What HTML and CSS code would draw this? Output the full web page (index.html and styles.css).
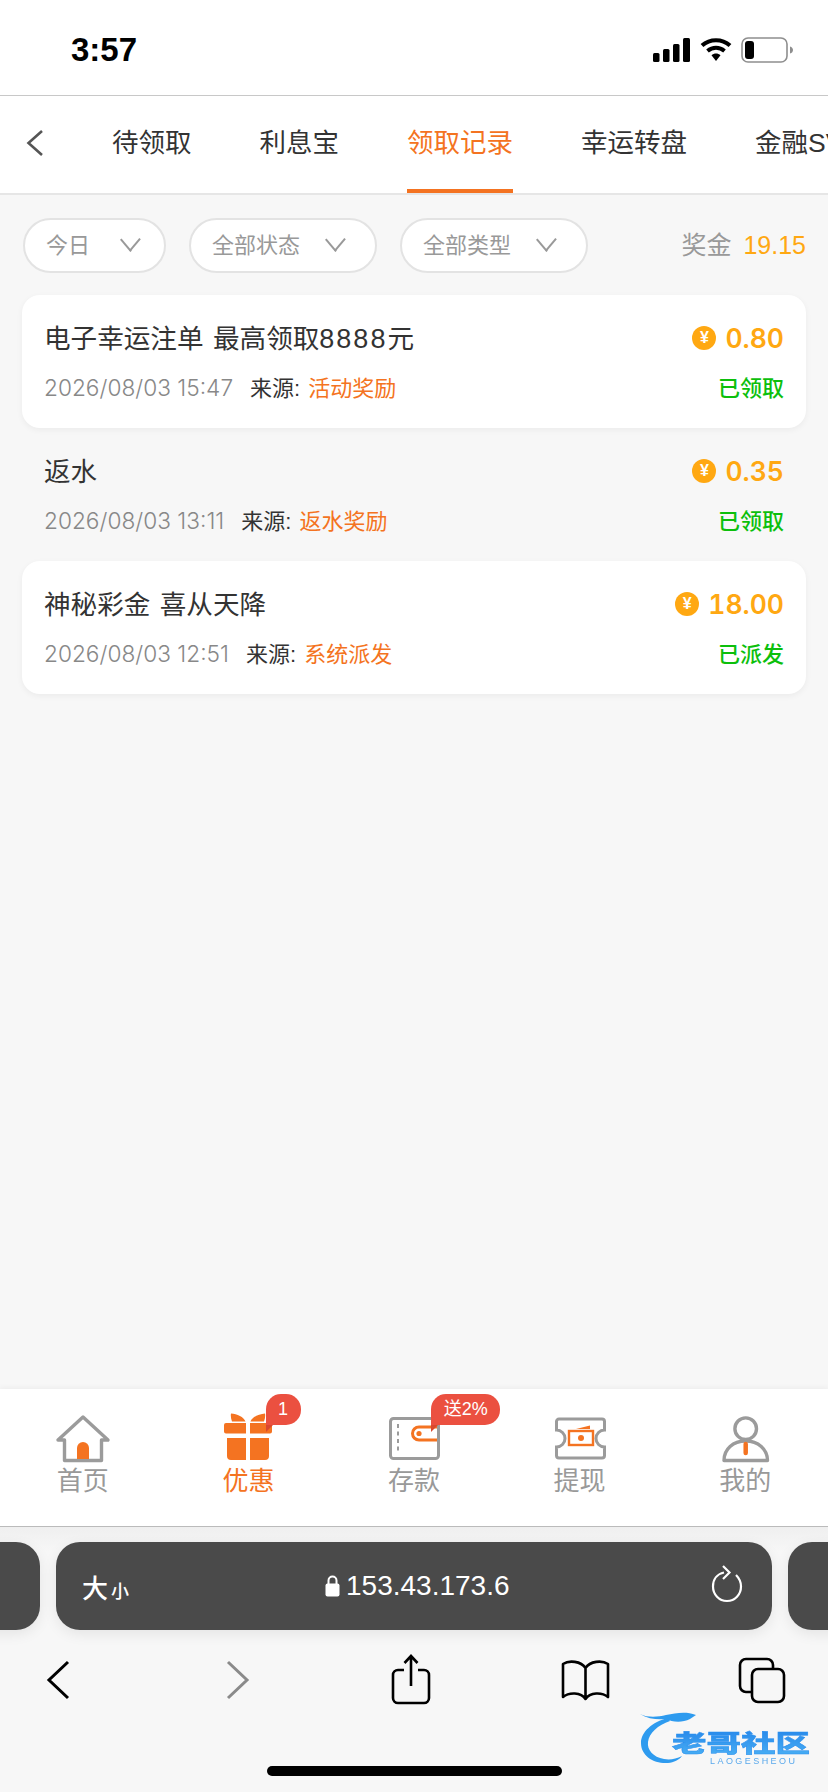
FILE: index.html
```html
<!doctype html>
<html lang="zh">
<head>
	<meta charset="UTF-8">
	<title>领取记录</title>
	<link rel="stylesheet" href="styles.css">
</head>
<body>
<div class="screen">
	<div class="statusbar">
		<span class="time">3:57</span>
		<div class="status-icons">
			<svg class="signal" width="38" height="24" viewBox="0 0 38 24"><rect x="0" y="15" width="6.5" height="9" rx="1.5"/><rect x="10" y="11" width="6.5" height="13" rx="1.5"/><rect x="20" y="6" width="6.5" height="18" rx="1.5"/><rect x="30" y="0" width="7" height="24" rx="1.5"/></svg>
			<svg class="wifi" width="32" height="24" viewBox="0 0 32 24"><path d="M2 8.500C10 1.500 22 1.500 30 8.500" fill="none" stroke="#000" stroke-width="4.200"/><path d="M7.500 14C12.500 9.800 19.500 9.800 24.500 14" fill="none" stroke="#000" stroke-width="4"/><path d="M11.500 18.200C14 16 18 16 20.500 18.200L16 24Z"/></svg>
			<svg class="battery" width="53" height="26" viewBox="0 0 53 26"><rect x="1" y="1" width="45" height="24" rx="6" fill="none" stroke="#8e8e8e" stroke-width="1.600"/><rect x="4" y="4" width="9" height="18" rx="3"/><path d="M49 9.500C51 10 52 11.500 52 13C52 14.500 51 16 49 16.500Z" fill="#8e8e8e"/></svg>
		</div>
	</div>

	<div class="tabs">
		<svg class="back" width="18" height="28" viewBox="0 0 18 28"><path d="M16 2L2.500 14L16 26" fill="none" stroke="#555" stroke-width="2.600"/></svg>
		<a class="tab">待领取</a>
		<a class="tab">利息宝</a>
		<a class="tab active">领取记录</a>
		<a class="tab">幸运转盘</a>
		<a class="tab">金融SVIP</a>
	</div>

	<div class="filters">
		<div class="pill pill-short"><span>今日</span><i class="arrow"></i></div>
		<div class="pill"><span>全部状态</span><i class="arrow"></i></div>
		<div class="pill"><span>全部类型</span><i class="arrow"></i></div>
		<div class="bonus">奖金<b>19.15</b></div>
	</div>

	<div class="list">
		<div class="record">
			<div class="line">
				<span class="title">电子幸运注单 最高领取<span class="num">8888</span>元</span>
				<span class="amount"><i class="coin">¥</i>0.80</span>
			</div>
			<div class="line">
				<span class="meta"><span class="date">2026/08/03 15:47</span>来源: <em>活动奖励</em></span>
				<span class="state">已领取</span>
			</div>
		</div>
		<div class="record">
			<div class="line">
				<span class="title">返水</span>
				<span class="amount"><i class="coin">¥</i>0.35</span>
			</div>
			<div class="line">
				<span class="meta"><span class="date">2026/08/03 13:11</span>来源: <em>返水奖励</em></span>
				<span class="state">已领取</span>
			</div>
		</div>
		<div class="record">
			<div class="line">
				<span class="title">神秘彩金 喜从天降</span>
				<span class="amount"><i class="coin">¥</i>18.00</span>
			</div>
			<div class="line">
				<span class="meta"><span class="date">2026/08/03 12:51</span>来源: <em>系统派发</em></span>
				<span class="state">已派发</span>
			</div>
		</div>
	</div>

	<div class="nav">
		<div class="nav-item">
			<svg width="56" height="50" viewBox="0 0 56 50"><path d="M3 27L28 4L53 27H46.500V47.500H9.500V27Z" fill="none" stroke="#9b9b9b" stroke-width="3.400" stroke-linejoin="round"/><path d="M22 46V35a6 6 0 0 1 12 0V46Z" fill="#f47321"/></svg>
			首页
		</div>
		<div class="nav-item active">
			<svg width="56" height="50" viewBox="0 0 56 50"><path d="M11 0.500C17 1 24 4 25.500 8.500H12C11 6 10.500 3 11 0.500ZM45 0.500C39 1 32 4 30.500 8.500H44C45 6 45.500 3 45 0.500Z" fill="#f47321"/><path d="M6 10H26V20.500H6a2 2 0 0 1-2-2V12a2 2 0 0 1 2-2ZM30 10H50a2 2 0 0 1 2 2V18.500a2 2 0 0 1-2 2H30Z" fill="#f47321"/><path d="M7 25H26V47H11a4 4 0 0 1-4-4ZM30 25H49V43a4 4 0 0 1-4 4H30Z" fill="#f47321"/></svg>
			优惠
			<span class="badge badge-num">1</span>
		</div>
		<div class="nav-item">
			<svg width="56" height="50" viewBox="0 0 56 50"><rect x="4.500" y="5.500" width="48" height="40" rx="3" fill="none" stroke="#9b9b9b" stroke-width="3"/><path d="M12 11V40" stroke="#9b9b9b" stroke-width="2" stroke-dasharray="4 3.500"/><path d="M51 14H33a6.500 6.500 0 0 0 0 13H51" fill="none" stroke="#f47321" stroke-width="3"/><circle cx="33" cy="20.500" r="2.600" fill="#f47321"/></svg>
			存款
			<span class="badge badge-text">送2%</span>
		</div>
		<div class="nav-item">
			<svg width="56" height="50" viewBox="0 0 56 50"><path d="M7 6H50a2.500 2.500 0 0 1 2.500 2.500V17a8.500 8.500 0 0 0 0 17V42.500A2.500 2.500 0 0 1 50 45H7a2.500 2.500 0 0 1-2.500-2.500V34a8.500 8.500 0 0 0 0-17V8.500A2.500 2.500 0 0 1 7 6Z" fill="none" stroke="#9b9b9b" stroke-width="3"/><rect x="17" y="18" width="24" height="14" fill="none" stroke="#f47321" stroke-width="2.400"/><circle cx="29" cy="25" r="3" fill="#f47321"/><path d="M24 16L38 12.500V16Z" fill="#f47321"/></svg>
			提现
		</div>
		<div class="nav-item">
			<svg width="56" height="50" viewBox="0 0 56 50"><circle cx="28.700" cy="15.700" r="10.800" fill="none" stroke="#9b9b9b" stroke-width="3.400"/><path d="M7 47.500C7 36 16 28 28.700 28C41 28 50.500 36 50.500 47.500Z" fill="none" stroke="#9b9b9b" stroke-width="3.400" stroke-linejoin="round"/><path d="M28.700 31V40" stroke="#f47321" stroke-width="4.500" stroke-linecap="round"/></svg>
			我的
		</div>
	</div>

	<div class="safari">
		<div class="addr-row">
			<div class="addr"></div>
			<div class="addr addr-main">
				<span class="aa">大<small>小</small></span>
				<span class="url">
					<svg width="15" height="22" viewBox="0 0 15 22"><path d="M3.500 9V5.500a4 4 0 0 1 8 0V9" fill="none" stroke="#fff" stroke-width="2"/><rect x="0.500" y="8.500" width="14" height="13" rx="2" fill="#fff"/></svg>
					153.43.173.6
				</span>
				<svg class="reload" width="32" height="38" viewBox="0 0 32 38"><path d="M13 7.500C6 9 2 14.500 2 21.500C2 29.500 8 36 16 36C24 36 30 29.500 30 21.500C30 17 28 13 25 10" fill="none" stroke="#fff" stroke-width="2.200"/><path d="M12 1L18.500 7.500L12 14" fill="none" stroke="#fff" stroke-width="2.200"/></svg>
			</div>
			<div class="addr"></div>
		</div>
		<div class="toolbar">
			<svg width="60" height="60" viewBox="0 0 60 60"><path d="M40 12L21 30L40 48" fill="none" stroke="#000" stroke-width="3"/></svg>
			<svg width="60" height="60" viewBox="0 0 60 60"><path d="M24 12L43 30L24 48" fill="none" stroke="#8a8a8a" stroke-width="3"/></svg>
			<svg width="60" height="60" viewBox="0 0 60 60"><path d="M24 20H18a5 5 0 0 0-5 5V48a5 5 0 0 0 5 5H44a5 5 0 0 0 5-5V25a5 5 0 0 0-5-5H38M31 36V6M24.500 13L31 6L37.500 13" fill="none" stroke="#000" stroke-width="2.600"/></svg>
			<svg width="60" height="60" viewBox="0 0 60 60"><path d="M30.500 18C26 11 14 10 8 14V47C14 42 26 42 30.500 49C35 42 47 42 53 47V14C47 10 35 11 30.500 18V49" fill="none" stroke="#000" stroke-width="2.600" stroke-linejoin="round"/></svg>
			<svg width="60" height="60" viewBox="0 0 60 60"><rect x="21" y="19" width="32" height="33" rx="6" fill="none" stroke="#000" stroke-width="2.600"/><path d="M21 42H15a6 6 0 0 1-6-6V15a6 6 0 0 1 6-6H36a6 6 0 0 1 6 6V19" fill="none" stroke="#000" stroke-width="2.600"/></svg>
		</div>
		<div class="home-bar"></div>
	</div>

	<!-- 水印 -->
	<svg class="watermark" width="176" height="60" viewBox="0 0 176 60">
		<defs>
			<linearGradient id="wm" x1="0" y1="0" x2="0" y2="1"><stop offset="0" stop-color="#1f7fe8"/><stop offset="1" stop-color="#4db4f5"/></linearGradient>
		</defs>
		<path d="M30 8C14 12 3 22 3 33C3 46 16 54 30 53C36 52.500 41 50 44 46C38 49 32 50 26 49C15 47 9 40 10 32C11 23 20 15 32 11Z" fill="#2e9bef"/>
		<path d="M2 4C10 8 20 7 28 5C38 3 48 1 58 5L52 9C44 13 34 12 28 9C20 10 10 9 2 4Z" fill="#2e9bef"/>
		<text class="wm-name" x="34" y="42" textLength="138" lengthAdjust="spacingAndGlyphs" fill="url(#wm)" stroke="#2b8fee" stroke-width=".5">老哥社区</text>
		<text class="wm-sub" x="72" y="54" textLength="85" lengthAdjust="spacing" fill="#5aa9ec">LAOGESHEOU</text>
	</svg>
</div>
</body>
</html>
```

FILE: styles.css
```css
*{
	padding:0;
	margin:0;
	box-sizing:border-box;
}
body{
	width:828px;
	height:1792px;
	overflow:hidden;
	background:#f7f7f7;
	font-family:"Liberation Sans","Noto Sans CJK SC",sans-serif;
}
.screen{
	position:relative;
	display:flex;
	flex-direction:column;
	height:1792px;
	overflow:hidden;
}

/* 状态栏 */
.statusbar{
	height:96px;
	flex:none;
	display:flex;
	justify-content:space-between;
	align-items:flex-start;
	padding:31px 34px 0 71px;
	background:#fff;
	border-bottom:1px solid #c8c8c8;
}
.time{
	font-size:33px;
	font-weight:bold;
	line-height:38px;
	color:#000;
}
.status-icons{
	display:flex;
	gap:9px;
	padding-top:6px;
}
.signal{
	margin-top:1px;
}

/* 顶部标签 */
.tabs{
	height:99px;
	flex:none;
	display:flex;
	gap:68px;
	padding-left:26px;
	background:#fff;
	border-bottom:2px solid #e6e6e6;
	overflow:hidden;
}
.back{
	align-self:center;
	flex:none;
	margin-top:-4px;
}
.tab{
	flex:none;
	height:97px;
	line-height:95px;
	font-size:26.500px;
	color:#333;
	border-bottom:4px solid transparent;
}
.tab.active{
	color:#f47321;
	border-bottom-color:#f47321;
}

/* 筛选 */
.filters{
	height:100px;
	flex:none;
	display:flex;
	align-items:center;
	gap:23px;
	padding:0 22px 0 23px;
}
.pill{
	height:55px;
	display:flex;
	align-items:center;
	gap:24px;
	padding:0 29px 0 21px;
	font-size:22px;
	color:#999;
	background:#fff;
	border:2px solid #e3e3e3;
	border-radius:28px;
}
.pill span{
	margin-top:-4px;
}
.pill-short{
	gap:29px;
	padding-right:23px;
}
.arrow{
	position:relative;
	width:22px;
	height:14px;
}
.arrow:before,
.arrow:after{
	content:"";
	position:absolute;
	top:6px;
	width:15.500px;
	height:2px;
	background:#999;
}
.arrow:before{
	left:-1px;
	transform:rotate(50deg);
}
.arrow:after{
	right:-1px;
	transform:rotate(-50deg);
}
.bonus{
	margin-left:auto;
	margin-top:-4px;
	font-size:25px;
	color:#999;
}
.bonus b{
	margin-left:12px;
	font-weight:normal;
	color:#ffa812;
}

/* 记录列表 */
.list{
	flex:1;
	padding:0 22px;
}
.record{
	height:133px;
	padding:24px 22px 0 23px;
	border-radius:18px;
}
.record:nth-child(odd){
	background:#fff;
	box-shadow:0 2px 6px rgba(0,0,0,.05);
}
.line{
	display:flex;
	justify-content:space-between;
	align-items:center;
	height:38px;
	margin-bottom:12px;
}
.title{
	margin:-4px 0 0 -1px;
	font-size:26.600px;
	word-spacing:2px;
	color:#333;
}
.num{
	font-size:27px;
	letter-spacing:2px;
}
.amount{
	display:flex;
	align-items:center;
	font-family:Inter,"Liberation Sans",sans-serif;
	font-size:26.500px;
	font-weight:600;
	font-variant-numeric:tabular-nums;
	color:#ffa812;
}
.coin{
	width:24px;
	height:24px;
	margin-right:9px;
	border-radius:50%;
	background:#ffa812;
	color:#fff;
	font-family:"Liberation Sans",sans-serif;
	font-size:16px;
	font-weight:bold;
	font-style:normal;
	line-height:24px;
	text-align:center;
}
.meta{
	margin:-4px 0 0 -1px;
	font-size:22px;
	color:#333;
}
.date{
	margin-right:17px;
	font-family:Inter,"Liberation Sans",sans-serif;
	font-size:22.700px;
	font-weight:300;
	color:#888;
}
.meta em{
	margin-left:2px;
	font-style:normal;
	color:#f47321;
}
.state{
	margin-top:-4px;
	font-size:22px;
	font-weight:500;
	color:#0cbf0c;
}

/* 底部导航 */
.nav{
	height:138px;
	flex:none;
	display:grid;
	grid-template-columns:repeat(5,1fr);
	background:#fff;
	border-bottom:1px solid #bbb;
	box-shadow:0 -2px 5px rgba(0,0,0,.04);
}
.nav-item{
	position:relative;
	display:flex;
	flex-direction:column;
	align-items:center;
	padding-top:24px;
	font-size:26px;
	line-height:32px;
	color:#999;
}
.nav-item svg{
	margin-bottom:2px;
}
.nav-item.active{
	color:#f47321;
}
.badge{
	position:absolute;
	top:5px;
	height:31px;
	line-height:30px;
	background:#eb5040;
	color:#fff;
	font-size:18px;
	text-align:center;
	border-radius:15px 15px 15px 0;
}
.badge:after{
	content:"";
	position:absolute;
	left:0;
	top:100%;
	border-top:7px solid #d9482f;
	border-right:7px solid transparent;
}
.badge-num{
	left:100px;
	width:35px;
}
.badge-text{
	left:100px;
	width:69px;
}

/* 浏览器底栏 */
.safari{
	height:265px;
	flex:none;
	padding-top:15px;
	background:linear-gradient(#efefef,#f7f7f7 25px);
}
.addr-row{
	display:flex;
	justify-content:center;
	gap:16px;
	height:88px;
}
.addr{
	flex:none;
	width:716px;
	height:88px;
	background:#4a4a4a;
	border-radius:24px;
	box-shadow:0 4px 14px rgba(0,0,0,.08);
}
.addr-main{
	position:relative;
	display:flex;
	align-items:center;
	justify-content:space-between;
	padding:0 30px 0 26px;
	color:#fff;
}
.aa{
	font-size:26px;
	font-weight:500;
}
.aa small{
	margin-left:3px;
	font-size:18px;
	font-weight:500;
}
.url{
	position:absolute;
	left:269px;
	top:0;
	height:88px;
	display:flex;
	align-items:center;
	gap:6px;
	font-size:28px;
}
.reload{
	margin-right:-1px;
	margin-top:-4px;
}
.toolbar{
	display:flex;
	justify-content:space-between;
	padding:0 37px 0 28px;
	margin-top:20px;
}
.home-bar{
	width:295px;
	height:10px;
	margin:56px auto 0;
	background:#000;
	border-radius:5px;
}

/* 水印 */
.watermark{
	position:absolute;
	left:638px;
	top:1710px;
	filter:blur(.5px);
}
.wm-name{
	font-size:24px;
	font-weight:900;
	font-family:"Noto Sans CJK SC",sans-serif;
}
.wm-sub{
	font-size:9px;
	font-family:"Liberation Sans",sans-serif;
}
```
